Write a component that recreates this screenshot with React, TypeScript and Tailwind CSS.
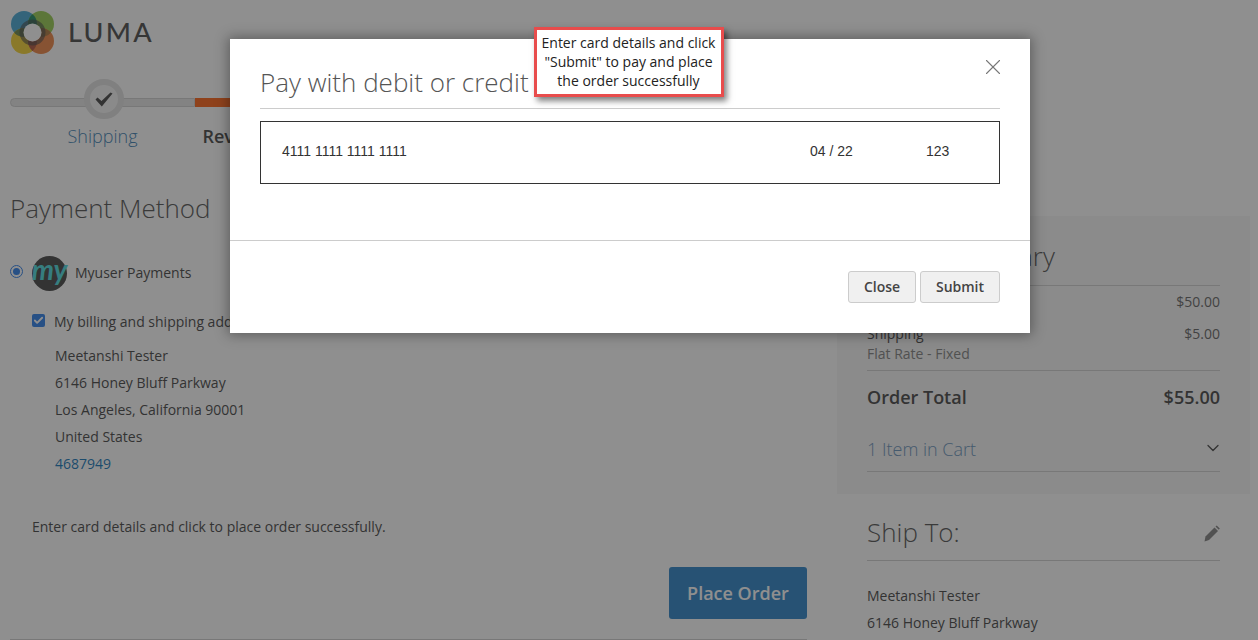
import React from "react";
import { X, ChevronDown, Check } from "lucide-react";

function Logo() {
  const centers = { tl: [14, 14], tr: [31, 14], bl: [14, 31], br: [31, 31] };
  return (
    <svg width="45" height="45" viewBox="0 0 45 45" className="shrink-0">
      <defs>
        <clipPath id="clipTl"><circle cx={centers.tl[0]} cy={centers.tl[1]} r="13" /></clipPath>
        <clipPath id="clipBr"><circle cx={centers.br[0]} cy={centers.br[1]} r="13" /></clipPath>
      </defs>
      <circle cx={centers.tl[0]} cy={centers.tl[1]} r="13" fill="#35a0d0" />
      <circle cx={centers.tr[0]} cy={centers.tr[1]} r="13" fill="#8fc740" />
      <circle cx={centers.bl[0]} cy={centers.bl[1]} r="13" fill="#f4cf1f" />
      <circle cx={centers.br[0]} cy={centers.br[1]} r="13" fill="#ee7a33" />
      <g clipPath="url(#clipTl)">
        <circle cx={centers.tr[0]} cy={centers.tr[1]} r="13" fill="#0b7f56" />
        <circle cx={centers.bl[0]} cy={centers.bl[1]} r="13" fill="#5c7a3a" />
      </g>
      <g clipPath="url(#clipBr)">
        <circle cx={centers.tr[0]} cy={centers.tr[1]} r="13" fill="#a56a2a" />
        <circle cx={centers.bl[0]} cy={centers.bl[1]} r="13" fill="#a8452a" />
      </g>
      <circle cx="22.5" cy="22.5" r="11" fill="none" stroke="#333333" strokeOpacity="0.6" strokeWidth="4" />
      <circle cx="22.5" cy="22.5" r="9" fill="#ffffff" />
    </svg>
  );
}

function Pencil() {
  return (
    <svg width="16" height="17" viewBox="0 0 16 17" className="mt-[4px] shrink-0">
      <path d="M0.5 16.5 L1.5 11.5 L10.5 2.5 L14 6 L5 15 Z" fill="#757575" />
      <path d="M11.5 1.5 L12.7 0.5 L15.8 3.6 L14.8 4.8 Z" fill="#757575" />
    </svg>
  );
}

function Row({ children, className = "" }: { children: React.ReactNode; className?: string }) {
  return <div className={`h-[27px] leading-[27px] ${className}`}>{children}</div>;
}

export default function App() {
  return (
    <div className="relative h-[640px] w-[1258px] overflow-hidden bg-white text-[14px] text-[#333333] font-['Open_Sans',sans-serif]">
      <header className="flex h-[76px] items-start gap-[13px] pl-[10px] pt-[10px]">
        <Logo />
        <span className="mt-[4px] font-['Lato',sans-serif] text-[27px] leading-[36px] font-medium tracking-[2.3px] text-[#3a3a3a]">LUMA</span>
      </header>

      <div className="flex pl-[10px]">
        <div className="relative w-[185px] pt-[22px]">
          <div className="h-[9px] rounded-l-[5px] border border-[#cccccc] bg-[#e4e4e4]" />
          <div className="absolute left-[74px] top-[3px] flex h-[40px] w-[40px] items-center justify-center rounded-full border-[6px] border-[#dddddd] bg-[#f4f4f4]">
            <svg width="18" height="15" viewBox="0 0 18 15">
              <path d="M0.5 7.5 L2.5 5.5 L6.5 9 L15.5 0.5 L17.5 1.5 L6.8 14.5 Z" fill="#333333" />
            </svg>
          </div>
          <div className="mt-[17px] text-center text-[18px] leading-[24px] font-light text-[#2a74ad]">Shipping</div>
        </div>
        <div className="w-[185px] pt-[22px]">
          <div className="h-[9px] bg-[#ff5501]" />
          <div className="mt-[17px] text-center text-[18px] leading-[24px] font-semibold whitespace-nowrap">Review &amp; Payments</div>
        </div>
      </div>

      <main className="mt-[40px] flex gap-[30px] pl-[10px]">
        <section className="w-[797px] shrink-0">
          <h1 className="h-[40px] text-[26px] leading-[40px] font-light text-[#444444]">Payment Method</h1>
          <div className="mt-[27px] flex h-[36px] items-center">
            <span className="flex h-[13px] w-[13px] -translate-y-[2px] items-center justify-center rounded-full border border-[#1a73e8] bg-white">
              <span className="h-[7px] w-[7px] rounded-full bg-[#1a73e8]" />
            </span>
            <span className="relative ml-[9px] flex h-[35px] w-[35px] items-center justify-center rounded-full bg-[#333333]">
              <span className="font-['Lato',sans-serif] text-[28px] leading-[28px] font-bold italic text-[#3ad8dc] -mt-[8px]">my</span>
            </span>
            <span className="ml-[8px] -translate-y-[1px]">Myuser Payments</span>
          </div>
          <div className="mt-[17px] ml-[22px]">
            <div className="flex h-[24px] items-center">
              <span className="flex h-[13px] w-[13px] items-center justify-center rounded-[2px] bg-[#1a73e8]">
                <Check size={11} strokeWidth={4} color="#ffffff" />
              </span>
              <span className="ml-[9px] mt-[2px] whitespace-nowrap">My billing and shipping address are the same</span>
            </div>
            <div className="ml-[23px] mt-[10px]">
              <Row>Meetanshi Tester</Row>
              <Row>6146 Honey Bluff Parkway</Row>
              <Row>Los Angeles, California 90001</Row>
              <Row>United States</Row>
              <Row className="text-[#006bb4]">4687949</Row>
            </div>
            <p className="mt-[40px] h-[20px] leading-[20px]">Enter card details and click to place order successfully.</p>
          </div>
          <div className="mt-[30px] flex justify-end">
            <button className="h-[52px] w-[138px] rounded-[3px] bg-[#1979c3] text-[18px] font-semibold text-white">Place Order</button>
          </div>
          <div className="mt-[20px] border-t border-[#cccccc]" />
        </section>

        <aside className="w-[413px] shrink-0 pt-[28px]">
          <div className="h-[278px] bg-[#f5f5f5] px-[30px] pt-[22px]">
            <h2 className="h-[48px] border-b border-[#cccccc] text-[26px] leading-[36px] font-light text-[#444444]">Order Summary</h2>
            <div className="mt-[6px] flex h-[20px] justify-between leading-[20px]">
              <span>Cart Subtotal</span>
              <span className="text-[#555555]">$50.00</span>
            </div>
            <div className="mt-[12px] flex h-[20px] justify-between leading-[20px]">
              <span>Shipping</span>
              <span className="text-[#555555]">$5.00</span>
            </div>
            <div className="h-[27px] border-b border-[#cccccc] leading-[20px] text-[#757575]">Flat Rate - Fixed</div>
            <div className="mt-[13px] flex h-[26px] justify-between text-[18px] leading-[26px] font-semibold">
              <span>Order Total</span>
              <span>$55.00</span>
            </div>
            <div className="mt-[26px] flex h-[36px] items-start justify-between border-b border-[#cccccc] text-[18px] leading-[26px] font-light text-[#5b8ab5]">
              <span>1 Item in Cart</span>
              <ChevronDown size={20} strokeWidth={1.5} color="#333333" className="-mr-[3px] mt-[2px]" />
            </div>
          </div>
          <div className="px-[30px]">
            <div className="mt-[11px] flex h-[56px] items-center justify-between border-b border-[#cccccc] pb-[2px]">
              <h2 className="text-[26px] leading-[40px] font-light text-[#444444]">Ship To:</h2>
              <Pencil />
            </div>
            <div className="mt-[21px]">
              <Row>Meetanshi Tester</Row>
              <Row>6146 Honey Bluff Parkway</Row>
            </div>
          </div>
        </aside>
      </main>

      <div className="absolute inset-0 bg-[#333333]/55" />

      <div className="absolute left-[230px] top-[39px] h-[294px] w-[800px] bg-white shadow-[0_0_12px_2px_rgba(0,0,0,0.35)]">
        <div className="relative h-[70px] px-[30px] pt-[25px]">
          <h3 className="h-[45px] border-b border-[#cccccc] text-[26px] leading-[36px] font-light whitespace-nowrap text-[#555555]">Pay with debit or credit card</h3>
          <X size={26} strokeWidth={1} color="#777777" className="absolute right-[24px] top-[15px]" />
        </div>
        <div className="mx-[30px] mt-[12px] flex h-[63px] items-center border border-[#333333] pb-[2px] font-['Liberation_Sans',sans-serif] text-[14px] text-[#333333]">
          <span className="ml-[21px] w-[528px]">4111 1111 1111 1111</span>
          <span className="w-[116px]">04 / 22</span>
          <span>123</span>
        </div>
        <div className="mt-[56px] flex h-[93px] justify-end gap-[4px] border-t border-[#cccccc] px-[30px] pt-[30px]">
          <button className="h-[32px] w-[68px] rounded-[3px] border border-[#cccccc] bg-[#f0f0f0] pb-[1px] text-[14px] font-semibold text-[#444444]">Close</button>
          <button className="h-[32px] w-[80px] rounded-[3px] border border-[#cccccc] bg-[#f0f0f0] pb-[1px] text-[14px] font-semibold text-[#444444]">Submit</button>
        </div>
      </div>

      <div className="absolute left-[534px] top-[27px] flex h-[70px] w-[190px] items-center justify-center border-[3px] border-[#e84c4c] bg-white pb-[1px] pr-[1px] text-center text-[14px] leading-[19px] text-[#222222] shadow-[3px_4px_6px_rgba(0,0,0,0.5)]">
        <p>Enter card details and click<br />"Submit" to pay and place<br />the order successfully</p>
      </div>
    </div>
  );
}
